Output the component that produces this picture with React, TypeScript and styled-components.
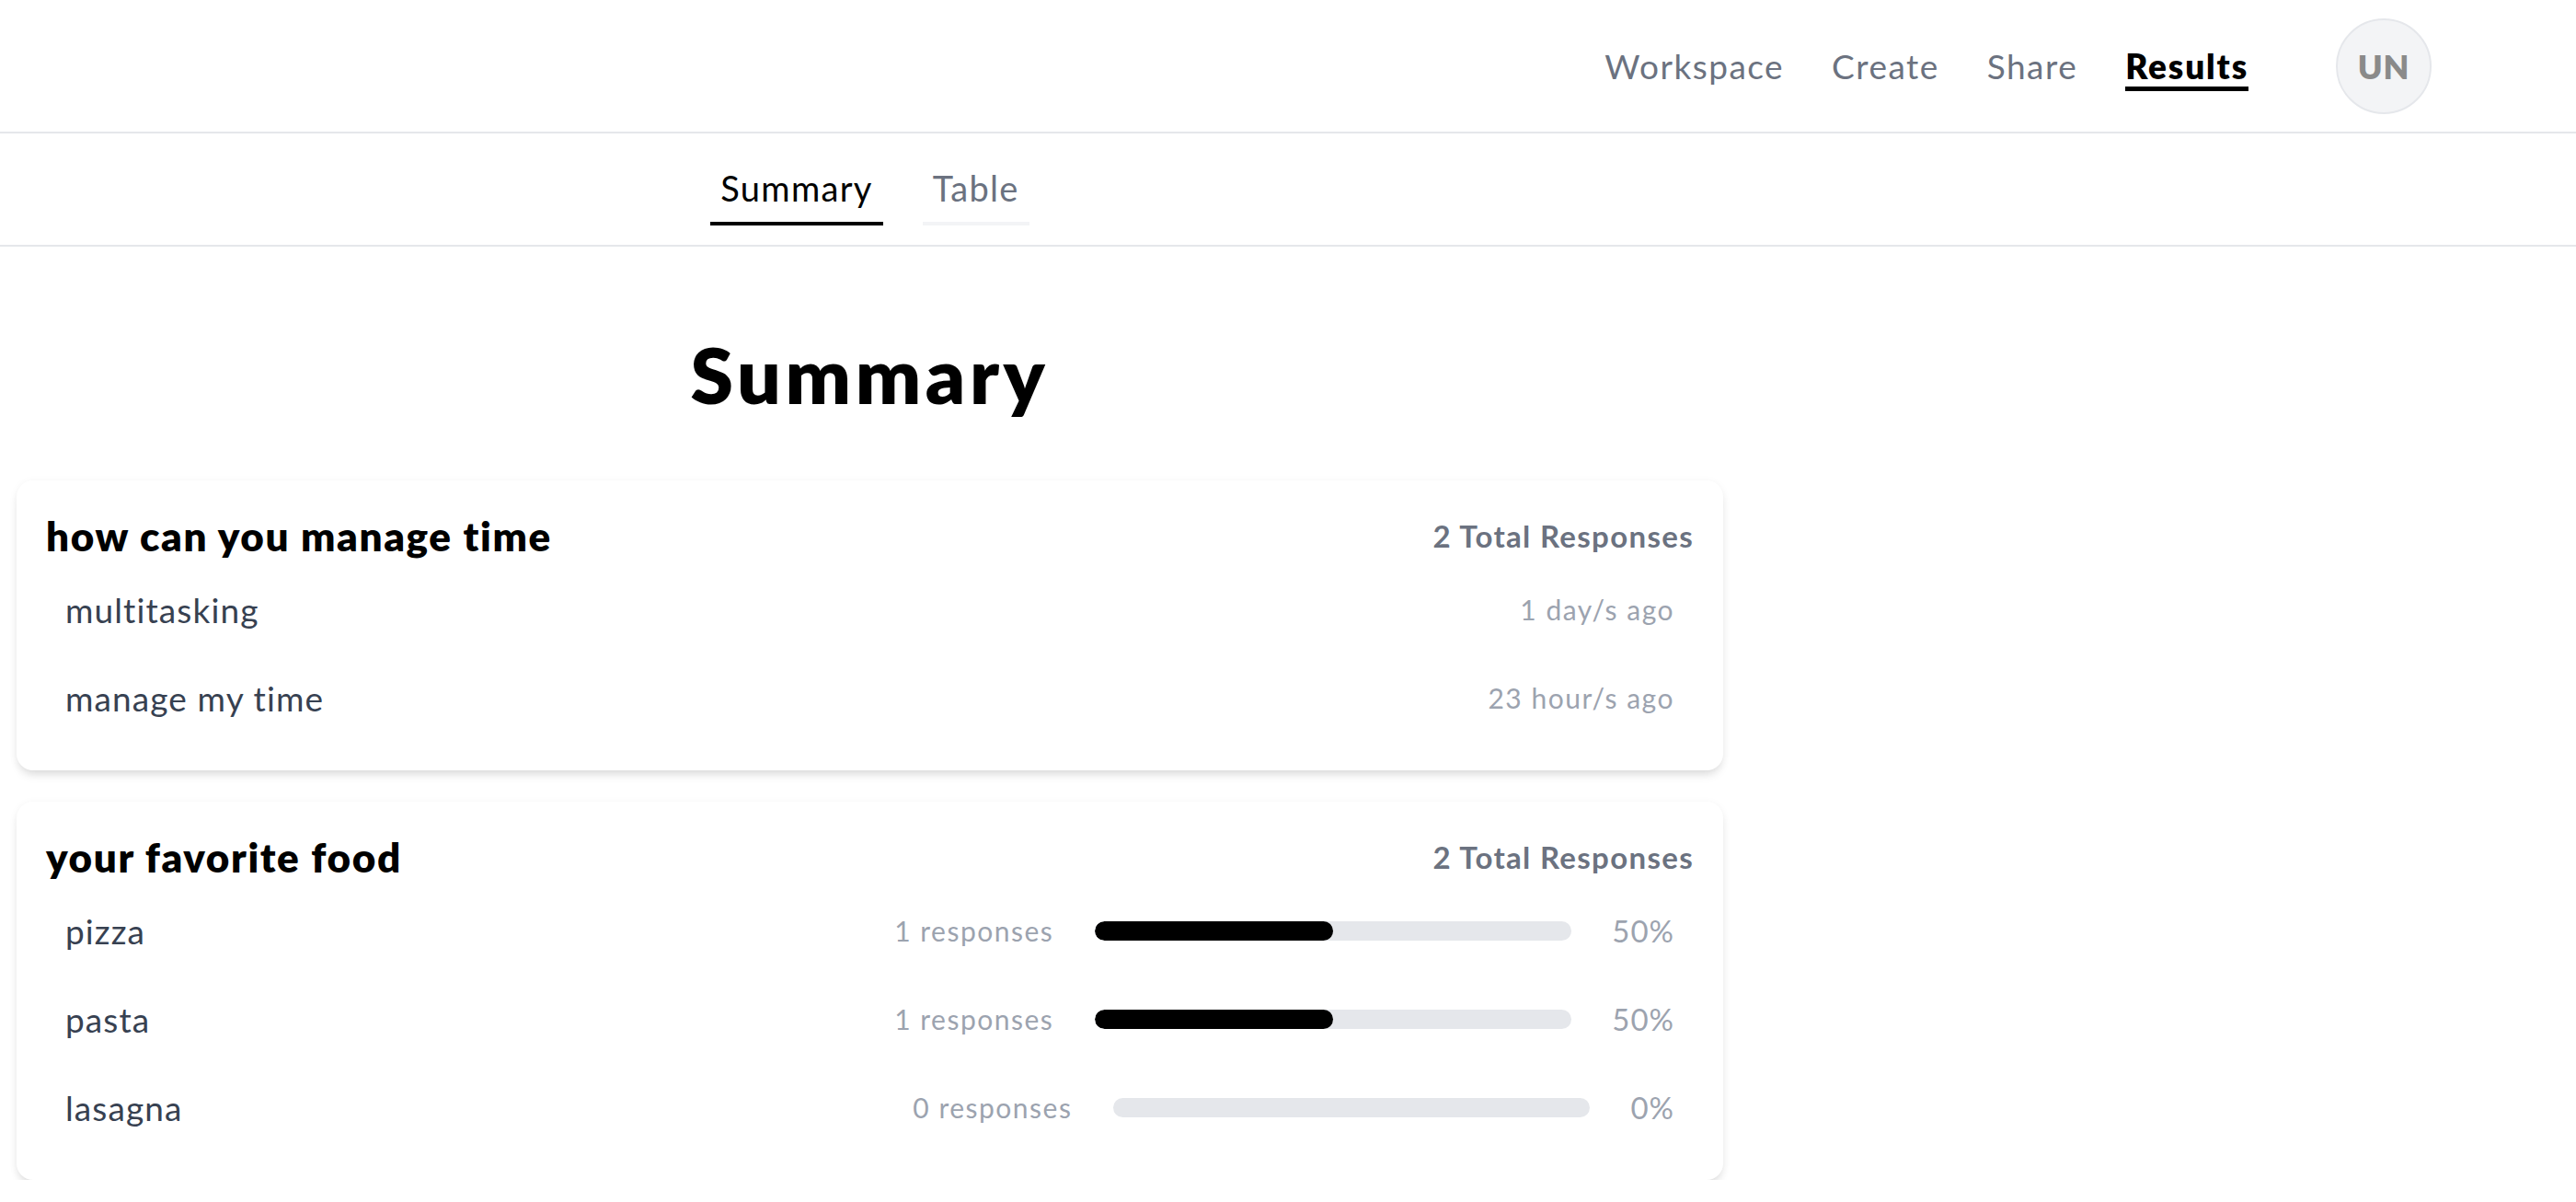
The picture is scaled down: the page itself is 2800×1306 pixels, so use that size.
import React from 'react';
import styled, { createGlobalStyle } from 'styled-components';

type TextAnswer = {
    text: string;
    when: string;
};

type ChoiceAnswer = {
    label: string;
    count: number;
    percent: number;
};

const GlobalStyle = createGlobalStyle`
    html, body {
        margin: 0;
        padding: 0;
        background: #ffffff;
        font-family: Lato, "Open Sans", Arial, sans-serif;
        color: #000000;
    }
`;

const Header = styled.header`
    display: flex;
    justify-content: flex-end;
    align-items: center;
    height: 143px;
    padding-right: 157px;
    border-bottom: 2px solid #e5e7eb;
`;

const Nav = styled.nav`
    display: flex;
    align-items: center;
    gap: 52px;
`;

const NavLink = styled.a<{ $active?: boolean }>`
    font-size: 37px;
    line-height: 44px;
    letter-spacing: ${({ $active }) => ($active ? '0.05em' : '0.04em')};
    font-weight: ${({ $active }) => ($active ? 800 : 400)};
    color: ${({ $active }) => ($active ? '#000000' : '#6b7280')};
    text-decoration: none;
    border-bottom: 5px solid ${({ $active }) => ($active ? '#000000' : 'transparent')};
    padding-top: 5px;
    cursor: pointer;
`;

const Avatar = styled.div`
    width: 100px;
    height: 100px;
    margin-left: 95px;
    border-radius: 50%;
    background: #f3f4f6;
    border: 2px solid #e5e7eb;
    display: flex;
    align-items: center;
    justify-content: center;
    font-size: 36px;
    font-weight: 800;
    letter-spacing: 0.02em;
    color: #8a8a8a;
`;

const TabBar = styled.div`
    border-bottom: 2px solid #e5e7eb;
    padding: 37px 0 21px;
`;

const Column = styled.div`
    width: 1855px;
    margin-left: 18px;
`;

const Tabs = styled.div`
    display: flex;
    justify-content: center;
    gap: 43px;
`;

const Tab = styled.button<{ $active?: boolean }>`
    background: none;
    border: none;
    border-bottom: 4px solid ${({ $active }) => ($active ? '#000000' : '#f3f4f6')};
    padding: 0 11px 15px;
    font-family: inherit;
    font-size: 38px;
    line-height: 44px;
    letter-spacing: 0.035em;
    font-weight: 400;
    color: ${({ $active }) => ($active ? '#000000' : '#6b7280')};
    cursor: pointer;
`;

const Heading = styled.h1`
    margin: 89px 0 65px;
    text-align: center;
    font-size: 84px;
    line-height: 100px;
    font-weight: 800;
    letter-spacing: 0.055em;
`;

const Cards = styled.div`
    display: flex;
    flex-direction: column;
    gap: 34px;
`;

const Card = styled.section`
    background: #ffffff;
    border-radius: 18px;
    padding: 28px 32px 31px;
    box-shadow: 0 2px 10px rgba(0, 0, 0, 0.06), 0 8px 12px -4px rgba(0, 0, 0, 0.12);
`;

const CardHead = styled.div`
    display: flex;
    justify-content: space-between;
    align-items: center;
    height: 64px;
`;

const Question = styled.h2`
    margin: 0;
    font-size: 44px;
    font-weight: 800;
    letter-spacing: 0.037em;
    color: #000000;
`;

const Total = styled.span`
    font-size: 33px;
    font-weight: 700;
    letter-spacing: 0.04em;
    color: #6b7280;
`;

const Row = styled.div`
    display: flex;
    align-items: center;
    justify-content: space-between;
    height: 96px;
    padding: 0 21px;
`;

const Answer = styled.span`
    font-size: 37px;
    font-weight: 400;
    letter-spacing: 0.03em;
    color: #374151;
`;

const Muted = styled.span`
    font-size: 30px;
    font-weight: 400;
    letter-spacing: 0.05em;
    color: #9ca3af;
`;

const Stats = styled.div`
    display: flex;
    align-items: center;
`;

const Track = styled.div`
    width: 518px;
    height: 21px;
    margin: 0 44px 0 45px;
    border-radius: 11px;
    background: #e5e7eb;
    overflow: hidden;
`;

const Fill = styled.div`
    height: 100%;
    border-radius: 11px;
    background: #000000;
`;

const Percent = styled.span`
    font-size: 33px;
    font-weight: 400;
    letter-spacing: 0.03em;
    color: #9ca3af;
`;

const timeAnswers: TextAnswer[] = [
    { text: 'multitasking', when: '1 day/s ago' },
    { text: 'manage my time', when: '23 hour/s ago' },
];

const foodAnswers: ChoiceAnswer[] = [
    { label: 'pizza', count: 1, percent: 50 },
    { label: 'pasta', count: 1, percent: 50 },
    { label: 'lasagna', count: 0, percent: 0 },
];

const App: React.FC = () => {
    return (
        <>
            <GlobalStyle />
            <Header>
                <Nav>
                    <NavLink>Workspace</NavLink>
                    <NavLink>Create</NavLink>
                    <NavLink>Share</NavLink>
                    <NavLink $active>Results</NavLink>
                </Nav>
                <Avatar>UN</Avatar>
            </Header>

            <TabBar>
                <Column>
                    <Tabs>
                        <Tab $active>Summary</Tab>
                        <Tab>Table</Tab>
                    </Tabs>
                </Column>
            </TabBar>

            <Column>
                <Heading>Summary</Heading>
                <Cards>
                    <Card>
                        <CardHead>
                            <Question>how can you manage time</Question>
                            <Total>2 Total Responses</Total>
                        </CardHead>
                        {timeAnswers.map((a) => (
                            <Row key={a.text}>
                                <Answer>{a.text}</Answer>
                                <Muted>{a.when}</Muted>
                            </Row>
                        ))}
                    </Card>
                    <Card>
                        <CardHead>
                            <Question>your favorite food</Question>
                            <Total>2 Total Responses</Total>
                        </CardHead>
                        {foodAnswers.map((a) => (
                            <Row key={a.label}>
                                <Answer>{a.label}</Answer>
                                <Stats>
                                    <Muted>{a.count} responses</Muted>
                                    <Track>
                                        <Fill style={{ width: `${a.percent}%` }} />
                                    </Track>
                                    <Percent>{a.percent}%</Percent>
                                </Stats>
                            </Row>
                        ))}
                    </Card>
                </Cards>
            </Column>
        </>
    );
};

export default App;
